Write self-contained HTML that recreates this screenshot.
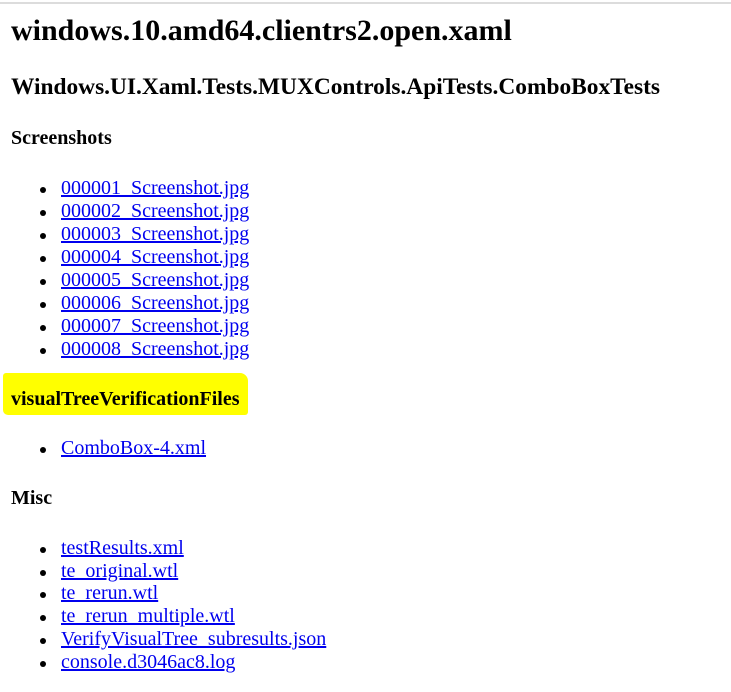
<!DOCTYPE html>
<html><head><meta charset="utf-8"><style>
html,body{margin:0;padding:0;background:#fff;width:731px;height:692px;overflow:hidden}
body{font-family:"Liberation Serif",serif;color:#000;position:relative}
.line{position:absolute;left:0;top:2px;width:731px;height:2px;background:#dcdcdc}
.t{position:absolute;left:11px;white-space:nowrap;font-weight:bold;line-height:30px}
.h1{font-size:30px;top:16px}
.h2{font-size:23.4px;top:72px}
.h4{font-size:20px;top:123px}
.li{position:absolute;left:61px;font-size:20px;line-height:23px;white-space:nowrap}
.li a{color:#0000ee;text-decoration:underline}
.li:before{content:"";position:absolute;left:-21px;top:10px;width:6px;height:6px;border-radius:50%;background:#000}
.hl{position:absolute;left:3px;top:373px;width:245px;height:42px;background:#ffff00;border-radius:3px 8px 3px 5px}
</style></head><body>
<div class="line"></div>
<div class="t h1">windows.10.amd64.clientrs2.open.xaml</div>
<div class="t h2">Windows.UI.Xaml.Tests.MUXControls.ApiTests.ComboBoxTests</div>
<div class="t h4">Screenshots</div>
<div class="li" style="top:177px"><a>000001_Screenshot.jpg</a></div>
<div class="li" style="top:200px"><a>000002_Screenshot.jpg</a></div>
<div class="li" style="top:223px"><a>000003_Screenshot.jpg</a></div>
<div class="li" style="top:246px"><a>000004_Screenshot.jpg</a></div>
<div class="li" style="top:269px"><a>000005_Screenshot.jpg</a></div>
<div class="li" style="top:292px"><a>000006_Screenshot.jpg</a></div>
<div class="li" style="top:315px"><a>000007_Screenshot.jpg</a></div>
<div class="li" style="top:338px"><a>000008_Screenshot.jpg</a></div>
<div class="hl"></div>
<div class="t h4" style="top:384px">visualTreeVerificationFiles</div>
<div class="li" style="top:437px"><a>ComboBox-4.xml</a></div>
<div class="t h4" style="top:483px">Misc</div>
<div class="li" style="top:537px"><a>testResults.xml</a></div>
<div class="li" style="top:560px"><a>te_original.wtl</a></div>
<div class="li" style="top:582px"><a>te_rerun.wtl</a></div>
<div class="li" style="top:605px"><a>te_rerun_multiple.wtl</a></div>
<div class="li" style="top:628px"><a>VerifyVisualTree_subresults.json</a></div>
<div class="li" style="top:651px"><a>console.d3046ac8.log</a></div>
</body></html>
